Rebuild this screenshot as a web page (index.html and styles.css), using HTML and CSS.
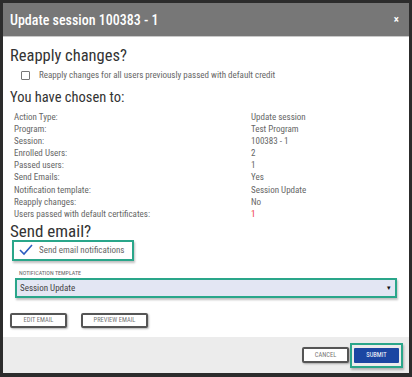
FILE: index.html
```html
<!DOCTYPE html>
<html lang="en">
  <head>
    <meta charset="UTF-8" />
    <title>Update session 100383 - 1</title>
    <link rel="stylesheet" href="styles.css">
  </head>
  <body>
    <div class="modal">
      <div class="modal-header">
        <p class="modal-title">Update session 100383 - 1</p>
        <span class="modal-close">&times;</span>
      </div>

      <div class="modal-body">
        <h2 class="reapply-title">Reapply changes?</h2>
        <label class="check-row">
          <span class="checkbox"></span>
          <span>Reapply changes for all users previously passed with default credit</span>
        </label>

        <h2 class="summary-title">You have chosen to:</h2>
        <div class="summary">
          <span>Action Type:</span><span>Update session</span>
          <span>Program:</span><span>Test Program</span>
          <span>Session:</span><span>100383 - 1</span>
          <span>Enrolled Users:</span><span>2</span>
          <span>Passed users:</span><span>1</span>
          <span>Send Emails:</span><span>Yes</span>
          <span>Notification template:</span><span>Session Update</span>
          <span>Reapply changes:</span><span>No</span>
          <span>Users passed with default certificates:</span><span class="red">1</span>
        </div>

        <h2 class="email-title">Send email?</h2>
        <label class="check-row highlight">
          <svg class="tick" width="14" height="12" viewBox="0 0 14 12">
            <polyline points="1,6 5,10 13,1" fill="none" stroke="#2b5cbf" stroke-width="1.6" />
          </svg>
          <span>Send email notifications</span>
        </label>

        <p class="field-label">NOTIFICATION TEMPLATE</p>
        <div class="select">
          <span>Session Update</span>
          <span class="arrow">&#9662;</span>
        </div>

        <div class="email-buttons">
          <button class="btn">EDIT EMAIL</button>
          <button class="btn btn-wide">PREVIEW EMAIL</button>
        </div>
      </div>

      <div class="modal-footer">
        <button class="btn btn-cancel">CANCEL</button>
        <span class="focus-ring">
          <button class="btn btn-submit">SUBMIT</button>
        </span>
      </div>
    </div>
  </body>
</html>
```

FILE: styles.css
```css
html,
body {
  margin: 0;
  height: 100%;
}

body {
  box-sizing: border-box;
  padding: 3px 3px 4px 3px;
  background-color: #2c2c2c;
  font-family: "Roboto", sans-serif;
  font-stretch: 86%;
}

.modal {
  height: 100%;
  display: flex;
  flex-flow: column nowrap;
  background-color: #fff;
}

.modal-header {
  height: 33px;
  display: flex;
  align-items: center;
  justify-content: space-between;
  padding: 0 10px 0 7px;
  background-color: #777;
  border-bottom: 1px solid #c9c9c9;
}

.modal-title {
  margin: 0;
  color: #fff;
  font-size: 14px;
  font-weight: 500;
}

.modal-close {
  color: #fff;
  font-size: 11px;
  font-weight: 700;
}

.modal-body {
  flex: 1;
  padding: 9px 12px 0 7px;
}

h2 {
  margin: 0;
  font-size: 17px;
  font-weight: 400;
  line-height: 20px;
  color: #333;
}

.reapply-title {
  font-size: 16.5px;
}

.check-row {
  display: flex;
  align-items: center;
  margin: 3px 0 0 11px;
  height: 12px;
  font-size: 9px;
  color: #666;
}

.checkbox {
  width: 7px;
  height: 7px;
  margin-right: 9px;
  border: 1px solid #777;
  border-radius: 1px;
}

.summary-title {
  margin-top: 7px;
  font-size: 14.5px;
}

.summary {
  display: grid;
  grid-template-columns: 237px 1fr;
  grid-auto-rows: 12.1px;
  margin: 3px 0 0 4px;
  font-size: 9px;
  line-height: 12px;
  color: #666;
}

.summary .red {
  color: #f03c3c;
}

.email-title {
  margin-top: 2px;
  line-height: 18px;
}

.check-row.highlight {
  width: 118px;
  height: 17px;
  margin: 0 0 0 2px;
  border: 2px solid #2aa68a;
  box-shadow: 1px 2px 2px rgba(0, 0, 0, 0.25);
}

.tick {
  margin: 0 6px 0 5px;
}

.field-label {
  margin: 8px 0 0 9px;
  font-size: 6px;
  color: #666;
}

.select {
  display: flex;
  align-items: center;
  justify-content: space-between;
  height: 16px;
  margin: 2px 0 0 5px;
  padding: 0 4px 0 3px;
  background-color: #e3e6f3;
  border: 2px solid #2aa68a;
  box-shadow: 1px 2px 2px rgba(0, 0, 0, 0.25);
  font-size: 9px;
  color: #444;
}

.arrow {
  font-size: 7px;
  color: #111;
}

.email-buttons {
  display: flex;
  gap: 14px;
  margin-top: 15px;
}

.btn {
  box-sizing: border-box;
  width: 57px;
  height: 15px;
  padding: 0;
  background-color: #fff;
  border: 2px solid #555;
  border-radius: 2px;
  box-shadow: 1px 1px 2px rgba(0, 0, 0, 0.3);
  font-family: "Roboto", sans-serif;
  font-stretch: 86%;
  font-size: 6.5px;
  color: #777;
}

.btn-wide {
  width: 67px;
}

.modal-footer {
  height: 36px;
  display: flex;
  align-items: center;
  justify-content: flex-end;
  gap: 1px;
  padding-right: 6px;
  background-color: #ececec;
}

.btn-cancel {
  width: 47px;
  height: 16px;
}

.focus-ring {
  display: flex;
  padding: 3px 2px;
  border: 2px solid #2aa68a;
  box-shadow: 1px 2px 2px rgba(0, 0, 0, 0.25);
}

.btn-submit {
  width: 45px;
  height: 15px;
  background-color: #1b46a2;
  border-color: #1b46a2;
  border-radius: 1px;
  box-shadow: none;
  color: #fff;
}
```
